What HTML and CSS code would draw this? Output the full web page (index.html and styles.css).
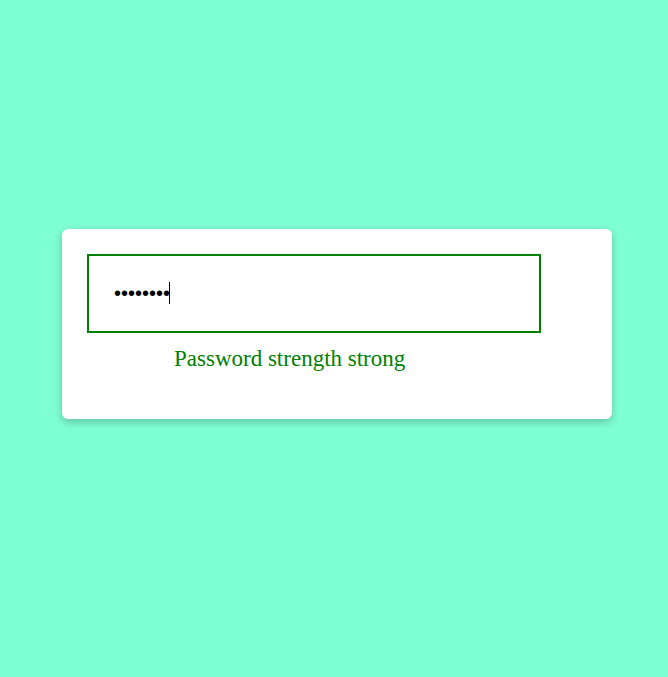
FILE: index.html
```html
<!DOCTYPE html>
<html lang="en">
<head>
<meta charset="utf-8">
<title>Password strength</title>
<link rel="stylesheet" href="styles.css">
</head>
<body>
<main class="card">
  <div class="field">
    <input class="password" type="password" value="abcd123!" aria-label="Password" aria-describedby="strength" autofocus>
    <span class="caret" aria-hidden="true"></span>
  </div>
  <p class="message" id="strength">Password strength strong</p>
</main>
</body>
</html>
```

FILE: styles.css
```css
* {
  box-sizing: border-box;
}

body {
  margin: 0;
  min-height: 100vh;
  padding: 0 56px 29px 62px;
  display: flex;
  align-items: center;
  justify-content: center;
  background: #7fffd4;
  font-family: "Liberation Serif", "Times New Roman", serif;
}

.card {
  width: 100%;
  max-width: 550px;
  padding: 25px 71px 46px 25px;
  background: #fff;
  border-radius: 6px;
  box-shadow: 0 3px 8px rgba(0, 0, 0, 0.24);
}

.field {
  position: relative;
}

.password {
  display: block;
  width: 100%;
  padding: 25px;
  border: 2px solid green;
  outline: none;
  background: #fff;
  color: #000;
  caret-color: transparent;
  font-family: "Liberation Sans", Arial, sans-serif;
  font-size: 20px;
  line-height: 25px;
}

/* Text cursor after the last character */
.caret {
  position: absolute;
  top: 28px;
  left: 82px;
  width: 1px;
  height: 22px;
  background: #000;
}

.message {
  margin: 12px 0 0;
  padding-left: 87px;
  color: green;
  font-size: 23px;
  line-height: 28px;
}
```
